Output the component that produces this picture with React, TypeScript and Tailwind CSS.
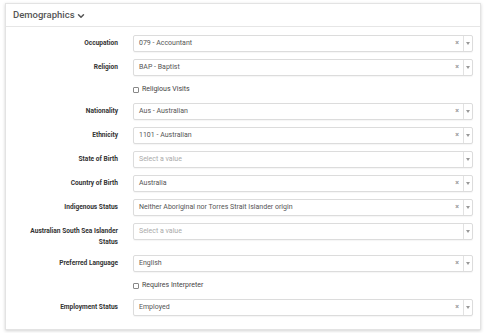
import { ChevronDown } from "lucide-react";

type Field =
  | { kind: "select"; label: string; value?: string; clearable?: boolean }
  | { kind: "check"; label: string };

const fields: Field[] = [
  { kind: "select", label: "Occupation", value: "079 - Accountant", clearable: true },
  { kind: "select", label: "Religion", value: "BAP - Baptist", clearable: true },
  { kind: "check", label: "Religious Visits" },
  { kind: "select", label: "Nationality", value: "Aus - Australian", clearable: true },
  { kind: "select", label: "Ethnicity", value: "1101 - Australian", clearable: true },
  { kind: "select", label: "State of Birth" },
  { kind: "select", label: "Country of Birth", value: "Australia", clearable: true },
  {
    kind: "select",
    label: "Indigenous Status",
    value: "Neither Aboriginal nor Torres Strait Islander origin",
    clearable: true,
  },
  { kind: "select", label: "Australian South Sea Islander Status" },
  { kind: "select", label: "Preferred Language", value: "English", clearable: true },
  { kind: "check", label: "Requires Interpreter" },
  { kind: "select", label: "Employment Status", value: "Employed", clearable: true },
];

function SelectBox({ value, clearable }: { value?: string; clearable?: boolean }) {
  return (
    <div className="flex h-[17px] flex-1 items-center rounded-[2px] border border-[#dcdcdc] bg-white shadow-[0_1px_1px_rgba(0,0,0,0.04)]">
      <span
        className={`flex-1 truncate pl-[5px] text-[7px] ${value ? "text-[#555]" : "text-[#aaa]"}`}
      >
        {value ?? "Select a value"}
      </span>
      {clearable && (
        <span className="mr-[4px] text-[7px] leading-none font-bold text-[#999]">×</span>
      )}
      <div className="flex h-full w-[9px] items-center justify-center border-l border-[#e2e2e2]">
        <svg width="4" height="3" viewBox="0 0 4 3">
          <path d="M0 0 L4 0 L2 3 Z" fill="#999" />
        </svg>
      </div>
    </div>
  );
}

export default function App() {
  return (
    <div
      className="min-h-screen bg-white pt-[3px] pl-[5px] pr-[4px]"
      style={{ fontFamily: "Roboto, 'Liberation Sans', sans-serif" }}
    >
      <div className="w-[476px] border border-[#e3e3e3] bg-white shadow-[0_1px_3px_rgba(0,0,0,0.18)]">
        {/* header */}
        <div className="flex h-[23px] items-center border-b border-[#e6e6e6] pl-[7px]">
          <span className="text-[9.5px] font-medium text-[#555]">Demographics</span>
          <ChevronDown size={10} strokeWidth={3.5} className="mt-[2px] ml-[1px] text-[#555]" />
        </div>

        {/* form */}
        <div className="flex flex-col gap-[7px] pt-[8px] pr-[7px] pb-[13px]">
          {fields.map((f) =>
            f.kind === "check" ? (
              <div key={f.label} className="flex h-[13px] items-center pl-[127px]">
                <span className="h-[6px] w-[6px] rounded-[1px] border border-[#888] bg-white" />
                <span className="ml-[3px] text-[7px] text-[#444]">{f.label}</span>
              </div>
            ) : (
              <div key={f.label} className="flex items-start">
                <label className="w-[112px] pt-[3px] pl-[16px] text-right text-[6.6px] leading-[11px] font-bold text-[#333]">
                  {f.label}
                </label>
                <div className="ml-[15px] flex flex-1">
                  <SelectBox value={f.value} clearable={f.clearable} />
                </div>
              </div>
            ),
          )}
        </div>
      </div>
    </div>
  );
}
